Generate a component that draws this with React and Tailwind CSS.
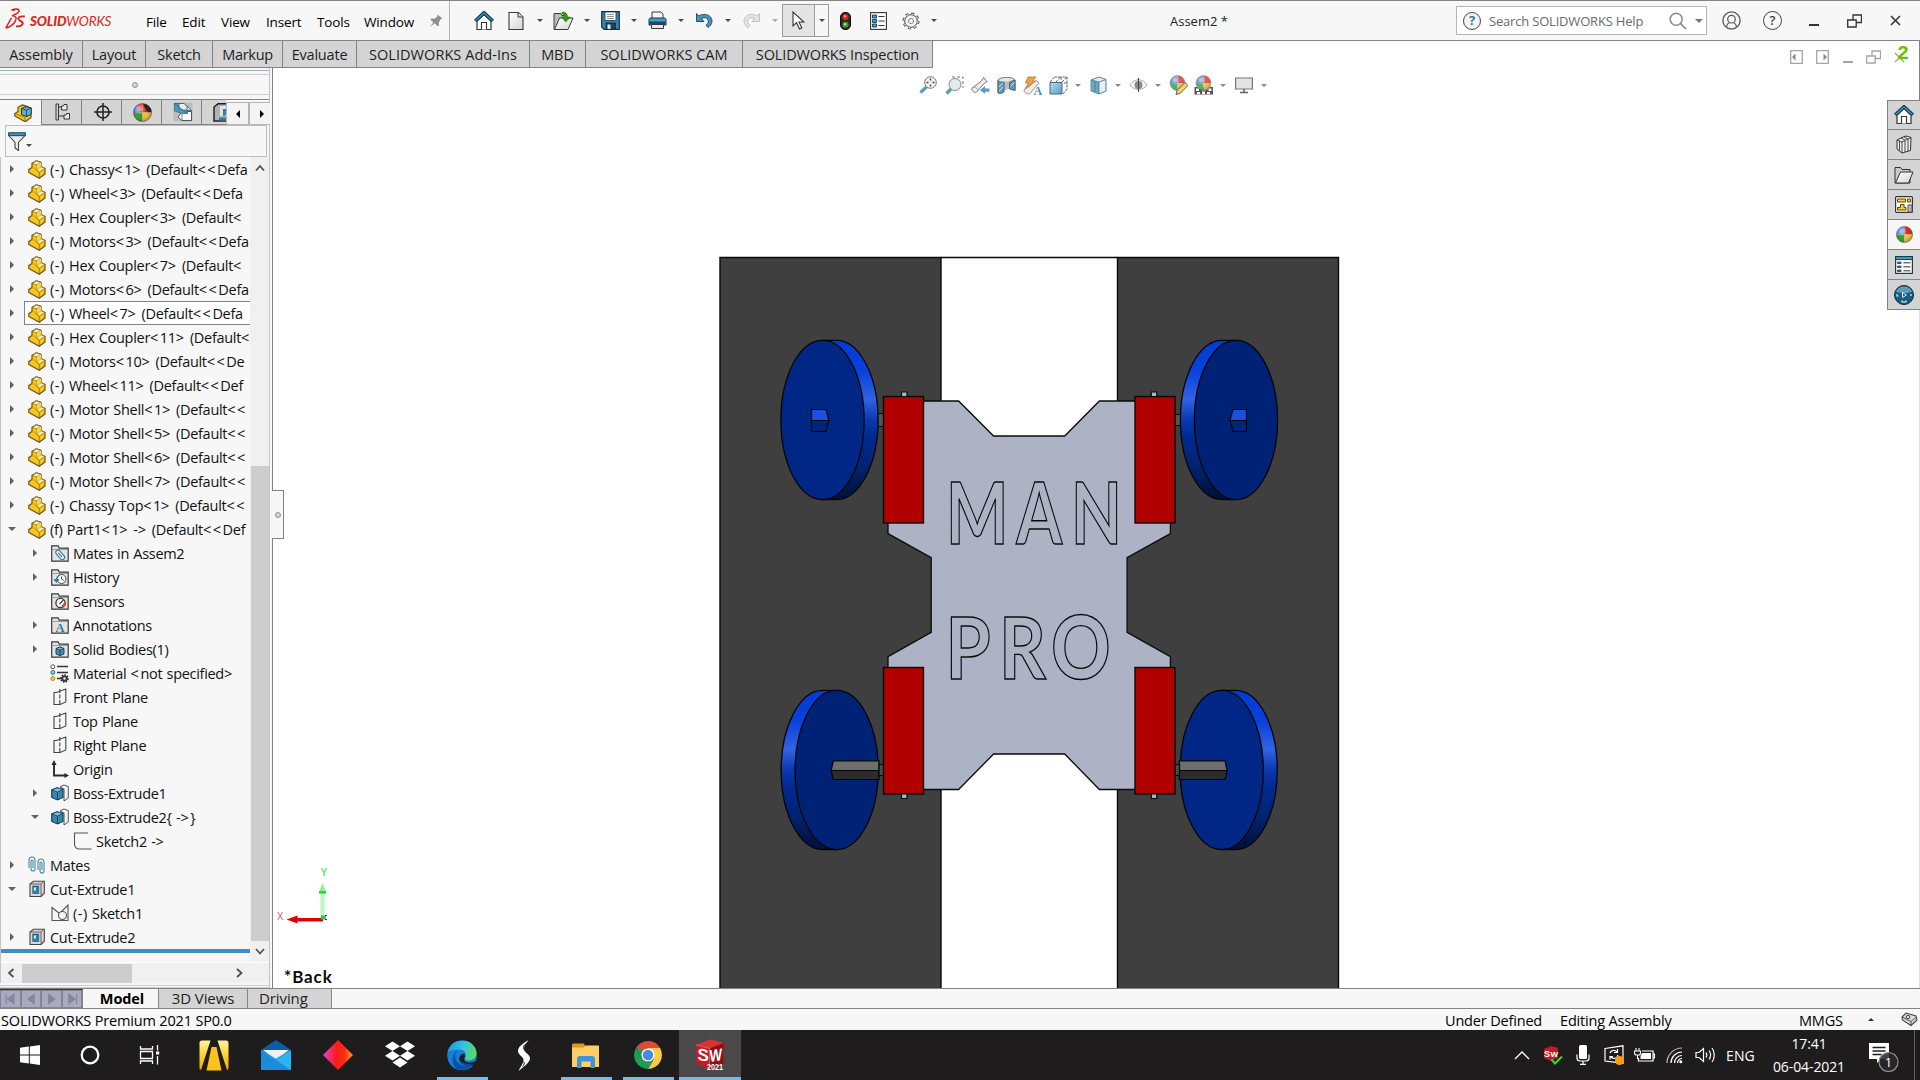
import React from "react";

const UI = "font-['Open_Sans','Noto_Sans',sans-serif]";

function Svg({ w = 20, h = w, vb, children, className = "" }) {
  return (
    <svg width={w} height={h} viewBox={vb || `0 0 ${w} ${h}`} fill="none" className={"block shrink-0 " + className}>
      {children}
    </svg>
  );
}

/* ---------- shared icons ---------- */
const Caret = ({ c = "#4a4a4a" }) => (
  <Svg w={6} h={3}><path d="M0 0h6L3 3z" fill={c} /></Svg>
);

const Home = () => (
  <Svg w={20} h={20}>
    <path d="M3 10v8.500h14V10L10 3.500z" fill="#fafafa" stroke="#333" strokeWidth="1.200" />
    <path d="M7.500 18.500v-7h5v7" fill="#fff" stroke="#333" strokeWidth="1.100" />
    <path d="M1.200 10 10 1.800 18.800 10" stroke="#12394f" strokeWidth="3.600" />
    <path d="M1.800 9.500 10 2 18.200 9.500" stroke="#3f8fbd" strokeWidth="1.500" />
  </Svg>
);
const NewDoc = () => (
  <Svg w={16} h={20}>
    <path d="M1 1.500h9.500l4.500 4.500v12.500H1z" fill="url(#gPaper)" stroke="#3a3a3a" strokeWidth="1.100" />
    <path d="M10 1.500V6h5" fill="#ddd" stroke="#3a3a3a" />
  </Svg>
);
const OpenDoc = () => (
  <Svg w={21} h={20}>
    <path d="M1 18.500V2.500h7l1 2h4v14z" fill="#bdbdbd" stroke="#3a3a3a" />
    <path d="M1.500 18.500 6.500 7h13.500l-5 11.500z" fill="url(#gPaper)" stroke="#3a3a3a" />
    <path d="M9 1c4 0 5.500 2 5.500 5h3l-4.800 5L8.500 6H11c0-2-.5-3-2-3.500z" fill="#2f9a12" stroke="#1d6b08" strokeWidth=".5" />
  </Svg>
);
const Save = () => (
  <Svg w={19} h={19}>
    <path d="M.7.7h17.600v17.600H3L.7 16z" fill="#3d82a8" stroke="#0f3347" strokeWidth="1.200" />
    <path d="M4 1h11v8.500H4z" fill="#fff" stroke="#234" strokeWidth=".8" />
    <path d="M6 3.500h7M6 5.500h7M6 7.500h7" stroke="#777" strokeWidth=".8" />
    <path d="M5 12h9.500v6.300H5z" fill="#1e4258" stroke="#0f2a3a" strokeWidth=".8" />
    <path d="M6.500 13.500h3V18h-3z" fill="#e8e8e8" />
  </Svg>
);
const Print = () => (
  <Svg w={19} h={19}>
    <path d="M4 8V1h9l2 2v5" fill="#f4f4f4" stroke="#3a3a3a" />
    <path d="M1 8.500C1 7.500 2 7 3 7h13c1 0 2 .5 2 1.500V14H1z" fill="#4a9cc6" stroke="#12394f" />
    <path d="M1.500 10.500h16v3h-16z" fill="#174b66" />
    <path d="M3.500 13.500h12v4h-12z" fill="#e8e8e8" stroke="#3a3a3a" />
  </Svg>
);
const Undo = ({ dim }) => (
  <Svg w={17} h={15} className={dim ? "-scale-x-100" : ""}>
    <path
      d="M.5.500 2.800 3C7 .5 12 1 14.500 4c2.500 3.200 2 7.500-2.500 10.500l-2-2.300c2.500-1.700 3-4 1.700-5.900C10.500 4.500 8 4 5.500 5.700L8 8.500H.500z"
      fill={dim ? "#e4e4e4" : "#4793bd"}
      stroke={dim ? "#bdbdbd" : "#16445e"}
      strokeWidth=".9"
    />
  </Svg>
);
const Cursor = () => (
  <Svg w={13} h={19}>
    <path d="M1 1v14l3.500-3.300L7.500 18l2.300-1L7 11h5z" fill="#fff" stroke="#333" strokeWidth="1.100" />
  </Svg>
);
const Traffic = () => (
  <Svg w={11} h={18}>
    <rect x=".5" y=".5" width="10" height="17" rx="4.500" fill="#2a2a2a" stroke="#111" />
    <circle cx="5.500" cy="5" r="3" fill="#e3261b" />
    <circle cx="5" cy="4.300" r="1.200" fill="#f98a7c" />
    <circle cx="5.500" cy="12.800" r="3" fill="#3c9a2f" />
    <circle cx="5" cy="12.200" r="1.200" fill="#a5e39a" />
  </Svg>
);
const ListIcon = () => (
  <Svg w={17} h={18}>
    <rect x=".6" y=".6" width="15.800" height="16.800" fill="#fff" stroke="#333" strokeWidth="1.100" />
    <path d="M2.500 3h4v3h-4zM2.500 7.500h4v3h-4zM2.500 12h4v3h-4z" fill="#4a9cc6" stroke="#12394f" strokeWidth=".9" />
    <path d="M8.500 4.500h6M8.500 9h6M8.500 13.500h6" stroke="#333" />
  </Svg>
);
const Gear = () => (
  <Svg w={18} h={18}>
    <circle cx="9" cy="9" r="7.200" stroke="#444" strokeWidth="2.600" strokeDasharray="2.830 2.830" />
    <circle cx="9" cy="9" r="6.300" fill="#f2f2f2" stroke="#444" strokeWidth="1" />
    <circle cx="9" cy="9" r="7" stroke="#f2f2f2" strokeWidth="1.200" strokeDasharray="1.900 3.598" strokeDashoffset="-.4" />
    <circle cx="9" cy="9" r="2.500" stroke="#444" strokeWidth="1" strokeDasharray="1.300 .7" />
  </Svg>
);
const Ball = ({ s = 19, eye }) => (
  <Svg w={s} h={s} vb="0 0 20 20">
    <path d="M10 10V.500A9.500 9.500 0 0 0 .5 10z" fill={eye ? "#d9221c" : "#4a7fd8"} />
    <path d="M10 10V.500A9.500 9.500 0 0 1 19.500 10z" fill="#d9221c" />
    <path d="M10 10H.500A9.500 9.500 0 0 0 10 19.500z" fill="#2e9a2c" />
    <path d="M10 10h9.500A9.500 9.500 0 0 1 10 19.500z" fill="#f0c13c" />
    {eye && <path d="M.5 10A9.500 9.500 0 0 1 5 2l2 8z" fill="#4a7fd8" />}
    <circle cx="10" cy="10" r="9.500" fill="url(#gShine)" stroke="#444" strokeWidth=".6" />
    {eye && <path d="M11 1c4 0 8 3.500 8.500 8-2 1.500-4 .5-5.500-2S11 4 11 1z" fill="#222" />}
  </Svg>
);
const BallPair = ({ kind }) => (
  <Svg w={20} h={20}>
    {kind === "scene" && (
      <g>
        <path d="M.5 12h18.500v7.500H.500z" fill="#555" />
        <path d="M2 13.500h3V16H2zM8 16.500h3V19H8zM14.500 13.500h3V16h-3zM3 17h3v2H3zM13 17h3v2h-3z" fill="#fff" />
      </g>
    )}
    <path d="M9.500 8V.500A7.500 7.500 0 0 0 2 8z" fill="#5e86d6" />
    <path d="M9.500 8V.500A7.500 7.500 0 0 1 17 8z" fill="#e0524f" />
    <path d="M9.500 8H2a7.500 7.500 0 0 0 7.500 7.500z" fill="#4fb06a" />
    <path d="M9.500 8H17a7.500 7.500 0 0 1-7.500 7.500z" fill="#ecc65c" />
    <circle cx="9.500" cy="8" r="7.500" stroke="#888" strokeWidth=".5" fill="url(#gShine)" />
    {kind === "edit" && <path d="M8 19.500 9 15.500l8-8 3 3-8 8z" fill="#f3d36b" stroke="#5a5140" strokeWidth=".9" />}
  </Svg>
);

const HelpBadge = () => (
  <div className="flex size-[18px] shrink-0 items-center justify-center rounded-full border border-[#444] bg-[#f4f4f4] text-[13px] leading-none font-bold text-[#2f7ea6]">?</div>
);

/* ---------- title bar ---------- */
const MENUS = [
  ["File", "w-[36px]"],
  ["Edit", "w-[39px]"],
  ["View", "w-[45px]"],
  ["Insert", "w-[51px]"],
  ["Tools", "w-[47px]"],
  ["Window", "w-[65px]"],
];

const Logo = () => (
  <div className="flex w-[109px] shrink-0 items-center pb-[3px] pl-[5px]">
    <Svg w={21} h={22}>
      <path d="M6.500 2.200C10 .500 14.500.500 14 3.200c-.3 1.600-3 3-5.800 3.800" stroke="#d9261c" strokeWidth="1.600" />
      <path d="M7.500 2.200 10 2M6.800 7.800C11 7.500 12.300 10.500 10 13.800 8 16.700 4.500 19.300.8 20M.8 20 6.500 9.800" stroke="#d9261c" strokeWidth="1.500" />
      <path d="M19.800 8.500c-3.200-.4-6.300.3-6.600 2.200-.3 2 5 2.300 4.600 4.800-.4 2.200-3.500 3.300-6.800 2.700" stroke="#d9261c" strokeWidth="1.900" />
    </Svg>
    <div className="ml-[4px] pt-[5px] font-['Lato',sans-serif] text-[13.500px] leading-none tracking-[-0.200px] whitespace-nowrap text-[#d9261c] italic">
      <span className="font-black">SOLID</span>
      <span>WORKS</span>
    </div>
  </div>
);

function TitleBar() {
  const tools = [
    [<NewDoc />], [<OpenDoc />], [<Save />], [<Print />], [<Undo />], [<Undo dim />, "#a8a8a8"],
  ];
  return (
    <header className="flex h-[41px] w-full shrink-0 items-center border-t border-b border-[#838383] bg-[#f7f7f7]">
      <Logo />
      <nav className="ml-[37px] flex items-center pt-[3px] text-[13.500px] tracking-[-0.150px] text-black">
        {MENUS.map(([m, w]) => (
          <span key={m} className={w + " whitespace-nowrap"}>{m}</span>
        ))}
      </nav>
      <div className="flex h-full w-[21px] items-center border-r border-[#b5b5b5]">
        <Svg w={14} h={14}>
          <path d="m8.500.500 5 4-1.800.7-2 3.300.3 2.800-1.300 1-3-3L1 13l3.300-4.800-3-2.700 1.500-1 2.900.3L8.300 2.500z" fill="#8e8e8e" />
        </Svg>
      </div>
      <div className="ml-[17px] flex h-full items-center">
        <div className="flex w-[33px] justify-center"><Home /></div>
        {tools.map(([icon, c], i) => (
          <div key={i} className="flex items-center">
            <div className="flex w-[32px] justify-center">{icon}</div>
            <div className="flex w-[15px] justify-center"><Caret c={c} /></div>
          </div>
        ))}
        <div className="flex h-[33px] w-[47px] border border-[#9a9a9a]">
          <div className="flex w-[32px] items-center justify-center border-r border-[#9a9a9a] bg-[#e4e4e4]"><Cursor /></div>
          <div className="flex w-[13px] items-center justify-center"><Caret /></div>
        </div>
        <div className="flex w-[32px] justify-center"><Traffic /></div>
        <div className="flex w-[34px] justify-center"><ListIcon /></div>
        <div className="flex w-[32px] justify-center"><Gear /></div>
        <div className="flex w-[14px] justify-center"><Caret /></div>
      </div>
      <div className="ml-[229px] pt-[2px] text-[13px] whitespace-nowrap text-[#222]">Assem2 *</div>
      <div className="ml-auto flex h-full items-center">
        <div className="flex h-[29px] w-[251px] items-center border border-[#b5b5b5] bg-white pl-[6px]">
          <HelpBadge />
          <span className="ml-[8px] w-[180px] pt-[2px] text-[13px] tracking-[-0.190px] whitespace-nowrap text-[#6a6a6a]">Search SOLIDWORKS Help</span>
          <Svg w={18} h={18}>
            <circle cx="7.200" cy="7.200" r="6" stroke="#8a8a8a" strokeWidth="1.500" />
            <path d="m11.500 11.500 5.500 5.500" stroke="#8a8a8a" strokeWidth="1.700" />
          </Svg>
          <div className="ml-[8px]"><Svg w={8} h={4}><path d="M0 0h8L4 4z" fill="#777" /></Svg></div>
        </div>
        <div className="flex w-[49px] justify-center">
          <Svg w={19} h={19}>
            <circle cx="9.500" cy="9.500" r="8.600" stroke="#555" strokeWidth="1.300" />
            <circle cx="9.500" cy="8.200" r="3.800" stroke="#555" strokeWidth="1.200" />
            <path d="M4.500 15.500c.5-2.300 1.800-3.500 3-4M14.500 15.500c-.5-2.300-1.800-3.500-3-4" stroke="#555" strokeWidth="1.200" />
          </Svg>
        </div>
        <div className="flex w-[33px] justify-center">
          <div className="flex size-[19px] items-center justify-center rounded-full border-[1.500px] border-[#444] text-[13px] leading-none font-semibold text-[#444]">?</div>
        </div>
        <div className="flex w-[49px] justify-center pt-[9px]"><div className="h-[2px] w-[10px] bg-[#333]" /></div>
        <div className="flex w-[33px] justify-center"><RestoreIcon c="#333" bg="#f7f7f7" /></div>
        <div className="flex w-[49px] justify-center pr-[1px]">
          <Svg w={11} h={11}><path d="m1 1 9 9M10 1 1 10" stroke="#333" strokeWidth="1.500" /></Svg>
        </div>
      </div>
    </header>
  );
}
const RestoreIcon = ({ c, bg }) => (
  <Svg w={15} h={14}>
    <path d="M6 1h8.500v7.500H6z" stroke={c} strokeWidth="1.300" />
    <path d="M.7 6h8.500v7H.700z" stroke={c} fill={bg} strokeWidth="1.300" />
  </Svg>
);

/* ---------- command tabs ---------- */
const TABS = [
  ["Assembly", "w-[83px] tracking-[-0.100px]"],
  ["Layout", "w-[63px] tracking-[-0.200px]"],
  ["Sketch", "w-[67px] tracking-[-0.200px]"],
  ["Markup", "w-[70px] tracking-[-0.300px]"],
  ["Evaluate", "w-[74px] tracking-[-0.200px]"],
  ["SOLIDWORKS Add-Ins", "w-[173px] tracking-[0.060px]"],
  ["MBD", "w-[56px] tracking-[-0.100px]"],
  ["SOLIDWORKS CAM", "w-[157px] tracking-[0.020px]"],
  ["SOLIDWORKS Inspection", "w-[190px] tracking-[-0.120px]"],
];
function CommandTabs() {
  return (
    <div className="flex h-[27px]">
      {TABS.map(([t, w]) => (
        <div key={t} className={w + " flex items-center justify-center border-r border-b border-[#838383] bg-[#d4d4d4] pt-[2px] text-[14.500px] whitespace-nowrap text-[#1e1e1e]"}>
          {t}
        </div>
      ))}
    </div>
  );
}

/* ---------- feature tree ---------- */
const PartIcon = () => (
  <Svg w={18} h={19}>
    <path d="M.8 9.500 4 7.500V3.300L8.300.900 13 2.400v4.300l4 1.600v5.700l-5.700 4.200L.8 12.500z" fill="#f6c51f" stroke="#6e5010" strokeWidth="1.200" />
    <path d="M4 3.300 8.300.900 13 2.400 8.800 5z" fill="#fdeeb0" stroke="#7a5a10" strokeWidth=".7" />
    <path d="M8.800 9.300 13 6.700l4 1.600-5.700 3.900z" fill="#fce68c" stroke="#8a6a18" strokeWidth=".7" />
    <path d="M8.800 5v4.300M11.300 12.200v5.800" stroke="#8a6a18" strokeWidth=".8" />
    <path d="M8.800 5 13 2.400v4.300L8.800 9.300z" fill="#fbd84e" />
    <path d="M4 7.500c1.500.2 2.500.7 3 2l4.300 2.700" stroke="#b88e1c" strokeWidth=".8" />
  </Svg>
);
const FolderIcon = ({ kind }) => (
  <Svg w={18} h={17}>
    <path d="M.7 16.200V.800h6.500l1 2.400h9v13z" fill="#e3e3e3" stroke="#3a3a3a" strokeWidth="1.200" />
    <path d="M1 4.500h16" stroke="#8a8a8a" strokeWidth=".8" />
    {kind === "mates" && (
      <g transform="rotate(-42 9 10)">
        <rect x="7" y="4.500" width="4.500" height="11" rx="2.200" stroke="#2f7ea6" strokeWidth="1.200" fill="#fff" />
        <path d="M9.200 7v6" stroke="#2f7ea6" strokeWidth="1.200" />
      </g>
    )}
    {kind === "history" && (
      <g>
        <circle cx="10.500" cy="10" r="4.500" fill="#fff" stroke="#444" />
        <path d="M10.500 7.500V10l2.300 1.500" stroke="#444" />
        <path d="M3 10.500h5L5.500 13.500zM5.500 10c.5-3 2.500-4.500 4.500-4.800" fill="#2f7ea6" stroke="#2f7ea6" strokeWidth=".9" />
      </g>
    )}
    {kind === "sensors" && (
      <g>
        <circle cx="9.500" cy="10" r="4.600" fill="#fff" stroke="#333" strokeWidth="1.300" />
        <path d="m8.500 11 4-4" stroke="#333" strokeWidth="1.100" />
        <path d="M11 13.800c2-.8 3-2.300 3-4.200" stroke="#e0401c" strokeWidth="2.400" />
      </g>
    )}
    {kind === "ann" && (
      <text x="9" y="14.500" textAnchor="middle" fontFamily="Liberation Serif, serif" fontWeight="700" fontSize="12.500" fill="#2f7ea6">A</text>
    )}
    {kind === "solid" && (
      <path d="M5 7.500 9 5.800l4 1.700V13l-4 1.700L5 13z M5 7.500l4 1.500 4-1.500M9 9v5.700" fill="#3f8fb5" stroke="#143c52" strokeWidth=".9" />
    )}
  </Svg>
);
const MaterialIcon = () => (
  <Svg w={19} h={19}>
    <circle cx="2.800" cy="2.800" r="2" stroke="#555" fill="#fff" />
    <circle cx="2.800" cy="8.500" r="2" stroke="#2f7ea6" fill="#7cc3e6" />
    <circle cx="2.800" cy="14.500" r="2" stroke="#a8871a" fill="#f8cf36" />
    <path d="M7 2.500h11M7 8.500h11M7 14.500h5" stroke="#333" strokeWidth="1.500" />
    <circle cx="14.500" cy="14.500" r="3.300" stroke="#333" strokeWidth="2" strokeDasharray="1.500 1" />
    <circle cx="14.500" cy="14.500" r="2.200" stroke="#333" strokeWidth="1.800" />
  </Svg>
);
const PlaneIcon = () => (
  <Svg w={14} h={18}>
    <path d="M1 4.500h2.500L12.800 1v13L7 16.500H1z" stroke="#444" strokeWidth="1.100" />
    <path d="M6.800 1v16" stroke="#444" strokeWidth="1.100" strokeDasharray="4 1.500" />
  </Svg>
);
const OriginIcon = () => (
  <Svg w={18} h={18}>
    <path d="M3 4v11.500h12" stroke="#2a2a2a" strokeWidth="1.900" />
    <path d="M3 0 5.600 5H.400zM18 15.500 13.500 18v-5z" fill="#2a2a2a" />
  </Svg>
);
const BossIcon = () => (
  <Svg w={18} h={18}>
    <path d="m9 3 4-2 4.300 1.500V14L13 17V5z" fill="#f2f2f2" stroke="#555" />
    <path d="M.7 6 6 3.800 12 5.500v8L6.500 16 .7 13.500z" fill="#3a87ae" stroke="#143c52" strokeWidth="1.100" />
    <path d="M.7 6 6.500 8 12 5.500 6 3.800z" fill="#7cc0de" stroke="#143c52" strokeWidth=".8" />
    <path d="M6.500 8v8" stroke="#143c52" strokeWidth=".9" />
  </Svg>
);
const CutIcon = () => (
  <Svg w={16} h={18}>
    <path d="M1 4 4.500 1.200h10.800v12L12 16.500H1z" fill="#d9d9d9" stroke="#444" strokeWidth="1.100" />
    <path d="M1 4h11v12.500M12 4l3-2.800" stroke="#555" strokeWidth=".9" />
    <path d="M4 6.500h5.500V13H4z" fill="#cfe8f4" stroke="#1d5674" strokeWidth="1.300" />
    <path d="M7 6.500h3V13H4v-2.500h3z" fill="#2f7ea6" />
  </Svg>
);
const MatesIcon = () => (
  <Svg w={17} h={18}>
    <path d="M1 12V4a3 3 0 0 1 6 0v9a2 2 0 0 1-4 0V5a1 1 0 0 1 2 0v7" stroke="#4a88a8" strokeWidth="1.100" />
    <path d="M10 14V6a3 3 0 0 1 6 0v9a2 2 0 0 1-4 0V7a1 1 0 0 1 2 0v7" stroke="#4a88a8" strokeWidth="1.100" />
  </Svg>
);
const SketchIcon = () => (
  <Svg w={19} h={18}>
    <path d="M15 1H1.500v10.500c0 3 1.500 5.500 5 5.500H18.500" stroke="#555" strokeWidth="1.100" />
  </Svg>
);
const Sketch1Icon = () => (
  <Svg w={18} h={18}>
    <path d="M1 3.500V16.500h16V1L8.500 9.500z" stroke="#555" strokeWidth="1.100" />
    <circle cx="11.500" cy="11.500" r="4" stroke="#555" strokeWidth="1.100" fill="#f7f7f7" />
  </Svg>
);

const parts = [
  "Chassy<1> (Default<<Defa",
  "Wheel<3> (Default<<Defa",
  "Hex Coupler<3> (Default<",
  "Motors<3> (Default<<Defa",
  "Hex Coupler<7> (Default<",
  "Motors<6> (Default<<Defa",
  "Wheel<7> (Default<<Defa",
  "Hex Coupler<11> (Default<",
  "Motors<10> (Default<<De",
  "Wheel<11> (Default<<Def",
  "Motor Shell<1> (Default<<",
  "Motor Shell<5> (Default<<",
  "Motor Shell<6> (Default<<",
  "Motor Shell<7> (Default<<",
  "Chassy Top<1> (Default<<",
];
const TREE = [
  ...parts.map((p, i) => ({ d: 0, a: "r", icon: <PartIcon />, t: "(-) " + p, sel: i === 6 })),
  { d: 0, a: "d", icon: <PartIcon />, t: "(f) Part1<1> -> (Default<<Def" },
  { d: 1, a: "r", icon: <FolderIcon kind="mates" />, t: "Mates in Assem2" },
  { d: 1, a: "r", icon: <FolderIcon kind="history" />, t: "History" },
  { d: 1, icon: <FolderIcon kind="sensors" />, t: "Sensors" },
  { d: 1, a: "r", icon: <FolderIcon kind="ann" />, t: "Annotations" },
  { d: 1, a: "r", icon: <FolderIcon kind="solid" />, t: "Solid Bodies(1)" },
  { d: 1, icon: <MaterialIcon />, t: "Material <not specified>" },
  { d: 1, icon: <PlaneIcon />, t: "Front Plane" },
  { d: 1, icon: <PlaneIcon />, t: "Top Plane" },
  { d: 1, icon: <PlaneIcon />, t: "Right Plane" },
  { d: 1, icon: <OriginIcon />, t: "Origin" },
  { d: 1, a: "r", icon: <BossIcon />, t: "Boss-Extrude1" },
  { d: 1, a: "d", icon: <BossIcon />, t: "Boss-Extrude2{ ->}" },
  { d: 2, icon: <SketchIcon />, t: "Sketch2 ->" },
  { d: 0, a: "r", icon: <MatesIcon />, t: "Mates" },
  { d: 0, a: "d", icon: <CutIcon />, t: "Cut-Extrude1" },
  { d: 1, icon: <Sketch1Icon />, t: "(-) Sketch1" },
  { d: 0, a: "r", icon: <CutIcon />, t: "Cut-Extrude2" },
];
const PAD = ["pl-0", "pl-[23px]", "pl-[46px]"];

/* Brackets and dashes are set a little wider than the letters around them. */
const Label = ({ t }) =>
  t.split(/([<>]+|\(-\))/).map((s, i) =>
    i % 2 ? <span key={i} className={s === "(-)" ? "tracking-[0.500px]" : "tracking-[1.500px]"}>{s}</span> : s
  );

function TreeRow({ row }) {
  return (
    <div className={"flex h-[24px] shrink-0 items-center " + PAD[row.d]}>
      <div className="flex w-[23px] shrink-0 justify-center pr-[2px]">
        {row.a === "r" && <Svg w={4} h={8}><path d="M0 0v8l4-4z" fill="#606060" /></Svg>}
        {row.a === "d" && <Svg w={8} h={4}><path d="M0 0h8L4 4z" fill="#606060" /></Svg>}
      </div>
      <div className={"flex h-full min-w-0 flex-1 items-center overflow-hidden " + (row.sel ? "border border-r-0 border-[#838383] bg-white" : "border border-r-0 border-transparent")}>
        <div className="flex w-[23px] shrink-0 justify-center">{row.icon}</div>
        <span className="ml-[2px] pt-[2px] text-[14.500px] leading-[20px] tracking-[-0.300px] whitespace-pre text-[#111] [word-spacing:0.800px]"><Label t={row.t} /></span>
      </div>
    </div>
  );
}

const Chevron = ({ d }) => (
  <Svg w={10} h={10}>
    <path
      d={{ up: "M1 7.500 5 3l4 4.500", down: "M1 3 5 7.500 9 3", left: "M7.500 1 3 5l4.500 4", right: "M3 1l4.500 4L3 9" }[d]}
      stroke="#505050"
      strokeWidth="1.800"
    />
  </Svg>
);

function PanelTabs() {
  const cell = "flex shrink-0 items-center justify-center border-r border-b border-[#838383] bg-[#d4d4d4] pl-[2px]";
  return (
    <div className="flex h-[26px] shrink-0 border-t border-[#838383]">
      <div className="flex w-[42px] shrink-0 items-center justify-center border-r border-[#838383] bg-[#f7f7f7] pl-[4px]">
        <Svg w={18} h={18}>
          <path d="M.8 9.500 4 7.500V3.300L8.300.900 13 2.400l4 2v9l-5.700 4.400L.8 12z" fill="#f6c51f" stroke="#6e5010" strokeWidth="1.200" />
          <path d="M.8 9.500 11 13.500v4" stroke="#8a6a18" strokeWidth=".8" />
          <path d="m7.500 4.500 4.500-2 5.300 1.500v6.500L12.500 12.500l-5-2z" fill="#5fa9cf" stroke="#143c52" />
          <path d="m7.500 4.500 5 1.700L17 4M12.500 6.200V12.500" stroke="#143c52" strokeWidth=".8" />
        </Svg>
      </div>
      <div className={cell + " w-[40px]"}>
        <Svg w={16} h={18}>
          <path d="M1 17V1h2.500v16zM3.500 4H7M3.500 13H9" stroke="#333" />
          <path d="M6.500 3h2l.5-1.500h3V7H6.500zM9 12h2l.5-1.500h3V16H9z" fill="#eee" stroke="#333" />
        </Svg>
      </div>
      <div className={cell + " w-[40px]"}>
        <Svg w={18} h={18}>
          <circle cx="9" cy="9" r="6" stroke="#222" strokeWidth="1.600" />
          <path d="M9 0v18M0 9h18" stroke="#222" strokeWidth="1.500" />
        </Svg>
      </div>
      <div className={cell + " w-[40px]"}><Ball s={19} eye /></div>
      <div className={cell + " w-[40px]"}>
        <Svg w={20} h={20}>
          <path d="M.5.500h19v19H.500z" fill="#b9bdc0" />
          <path d="M9 9.500h9.500V18.500H9L5 15z" fill="#fff" stroke="#444" strokeWidth=".9" />
          <path d="M1.500 1.500H11l7.500 7H9.500z" fill="#e4eef3" stroke="#444" strokeWidth=".8" />
          <path d="M1.500 1.500H6V8h8.500v3.500H9.500L1.500 9z" fill="#4f9cc2" stroke="#2f6d8c" strokeWidth=".8" />
          <path d="M1.500 1.500 14 11.500M14 3.500V11M9 18.500v-7" stroke="#2f6d8c" strokeWidth=".8" />
        </Svg>
      </div>
      <div className={cell + " w-[24px] border-r-0 !justify-end"}>
        <Svg w={13} h={19}>
          <path d="M14 .800H5L1 4v14h13" fill="#aeb4b8" stroke="#222" strokeWidth="1.500" />
          <path d="M7 3h7v3H10v7H7z" fill="#dfe3e5" />
          <path d="M10 6h4v5h-2v2h-2zM6 14.500h8v3H6z" fill="#2f7ea6" />
        </Svg>
      </div>
      <div className="flex w-[44px] shrink-0 pt-[2px]">
        <div className="flex w-[23px] shrink-0 items-center justify-center border border-[#b5b5b5] bg-[#f4f4f4]">
          <Svg w={4} h={8}><path d="M4 0v8L0 4z" fill="#000" /></Svg>
        </div>
        <div className="flex w-[21px] shrink-0 items-center justify-center border border-r-0 border-[#b5b5b5] bg-[#f4f4f4] pl-[3px]">
          <Svg w={4} h={8}><path d="M0 0v8l4-4z" fill="#000" /></Svg>
        </div>
      </div>
    </div>
  );
}

function FeaturePanel() {
  return (
    <aside className="flex w-[273px] shrink-0 border-r border-[#838383] bg-[#f7f7f7]">
      <div className="flex w-[270px] flex-col border-r border-[#c4c4c4]">
        <div className="mt-[2px] h-px shrink-0 bg-[#9bb3ba]" />
        <div className="mt-[3px] flex h-[21px] shrink-0 items-center justify-center border-t border-b border-[#cfcfcf]">
          <div className="size-[6px] rounded-full border border-[#8f8f8f] bg-[#d6d6d6]" />
        </div>
        <div className="h-[4px] shrink-0" />
        <PanelTabs />
        <div className="mr-[2px] ml-[5px] flex h-[32px] shrink-0 items-center border border-[#bdbdbd] pl-[2px]">
          <Svg w={18} h={19}>
            <path d="M.7 3.500 7 10.500V16l3.500 2.500v-8L17 3.500z" fill="#eee" stroke="#444" strokeWidth="1.100" />
            <path d="M.5.700h17v3H.500z" fill="#3f8fbd" stroke="#1c4f6b" />
          </Svg>
          <div className="mt-[8px]"><Caret /></div>
        </div>
        <div className="flex h-[805px] shrink-0 border-l border-[#c4c4c4]">
          <div className="flex w-[249px] flex-col overflow-hidden">
            {TREE.map((r, i) => <TreeRow key={i} row={r} />)}
            <div className="h-[4px] shrink-0 bg-[#3b8ec9]" />
          </div>
          <div className="flex w-[19px] flex-col items-center bg-[#f0f0f0]">
            <div className="flex h-[309px] flex-col pt-[6px]"><Chevron d="up" /></div>
            <div className="h-[475px] w-[18px] bg-[#cdcdcd]" />
            <div className="pt-[5px]"><Chevron d="down" /></div>
          </div>
        </div>
        <div className="flex h-[21px] shrink-0 items-center border-t border-l border-[#c4c4c4] border-t-white bg-[#f0f0f0]">
          <div className="flex w-[21px] justify-center pr-[2px]"><Chevron d="left" /></div>
          <div className="h-[19px] w-[110px] bg-[#cdcdcd]" />
          <div className="ml-[102px]"><Chevron d="right" /></div>
        </div>
        <div className="mt-[2px] h-[3px] shrink-0 border-t border-b border-[#cfcfcf]" />
      </div>
    </aside>
  );
}

/* ---------- graphics area ---------- */
function Wheel({ cx, cy, dx, fill }) {
  const rx = 41.600, ry = 79.600;
  const bx = cx + dx;
  return (
    <g stroke="#050505" strokeWidth="1.300">
      <path
        d={`M${cx} ${cy - ry}L${bx} ${cy - ry}A${rx} ${ry} 0 0 ${dx > 0 ? 1 : 0} ${bx} ${cy + ry}L${cx} ${cy + ry}Z`}
        fill="url(#gRim)"
      />
      <ellipse cx={cx} cy={cy} rx={rx} ry={ry} fill={fill} />
    </g>
  );
}

function Model() {
  return (
    <svg width="1646" height="920" viewBox="273 68 1646 920" fill="none" className="block">
      <path d="M720 990V257.500H941V990zM1117.500 990V257.500H1338.500V990z" fill="#3f3f3f" stroke="#0a0a0a" strokeWidth="1.400" />
      <path d="M941 257.500h176.500" stroke="#0a0a0a" strokeWidth="1.400" />

      <g fill="#555" stroke="#0a0a0a" strokeWidth="1">
        <rect x="877" y="413.500" width="7" height="13" />
        <rect x="1175" y="414.500" width="7" height="11" />
      </g>
      <Wheel cx={822.500} cy={420} dx={14} fill="#002686" />
      <Wheel cx={1236} cy={420} dx={-14} fill="#002276" />
      <Wheel cx={836.700} cy={770} dx={-14} fill="#002276" />
      <Wheel cx={1221.700} cy={770} dx={14} fill="#002686" />

      <g stroke="#050505" strokeWidth="1.200">
        <path d="M811.500 409.500H826l2.800 11h-17.300z" fill="#1a50df" />
        <path d="M811.500 431.500H826l2.800-11h-17.300z" fill="#00247c" />
        <path d="M1246.500 409.500H1233l-3.200 11h16.700z" fill="#1a50df" />
        <path d="M1246.500 431.500H1233l-3.200-11h16.700z" fill="#00247c" />
        <path d="M879 760.800h-45.700l-2.100 9.700H879z" fill="#6e6e6e" />
        <path d="M879 779.500h-45.700l-2.100-9H879z" fill="#2c2c2c" />
        <path d="M1179.300 760.800h45.800l2 9.700h-47.800z" fill="#6e6e6e" />
        <path d="M1179.300 779.500h45.800l2-9h-47.800z" fill="#2c2c2c" />
        <path d="M879 764.500h5v11h-5zM1174.500 764.500h5v11h-5z" fill="#4a4a4a" />
      </g>

      <path
        d="M888 520v13.500l43.200 24.200v74.600L888 656.700V789.500h70.600l35-35.500h71.100l34.700 35.500h71V656.700l-43.300-24.400v-74.600l43.300-24.200V401h-71l-34.700 35h-71.100l-35-35H888z"
        fill="#adb2c5"
        stroke="#0a0a0a"
        strokeWidth="1.300"
      />
      <g fill="#b00000" stroke="#0a0a0a" strokeWidth="1.400">
        <rect x="883.500" y="396.500" width="40" height="126.500" />
        <rect x="1135" y="396.500" width="40" height="126.500" />
        <rect x="883.500" y="667.500" width="40" height="126.500" />
        <rect x="1135" y="667.500" width="40" height="126.500" />
      </g>
      <g fill="#adb2c5" stroke="#0a0a0a" strokeWidth="1.200">
        <path d="M901.500 392h5.500v4.500h-5.500zM1151.300 392h5.500v4.500h-5.500zM901.500 794h5.500v4.500h-5.500zM1151.300 794h5.500v4.500h-5.500z" />
      </g>

      <g fontFamily="Lato, sans-serif" fontSize="87" fontWeight="700" fill="none" stroke="#0a0a0a" strokeWidth="1.400">
        <text transform="translate(946 543.500) scale(.76 1)" x="0 92.500 164.500" y="0">MAN</text>
        <text transform="translate(945.500 679.300) scale(.84 1)" x="0 63.700 126" y="0">PR<tspan fontWeight="900">O</tspan></text>
      </g>

      {/* orientation triad */}
      <path d="M320.500 919v-26h4v26z" fill="#b9f7bd" />
      <path d="m322.500 883 4 10.500h-8z" fill="#8af090" />
      <path d="M319 891h7v2.500h-7z" fill="#22d83a" />
      <path d="M296 918h27v3.500h-27z" fill="#d40808" />
      <path d="m286.500 919.500 11-4v8z" fill="#e00000" />
      <path d="M321 915.500h3v4h-3z" fill="#22c83a" />
      <path d="M327 915.500h-2v4h2" stroke="#2028d8" />
      <text x="321" y="876" fontFamily="Open Sans, sans-serif" fontSize="10.500" fill="#20d838">Y</text>
      <text x="277.200" y="920" fontFamily="Open Sans, sans-serif" fontSize="10.500" fill="#f05050">X</text>
      <text x="284" y="983" fontFamily="Lato, sans-serif" fontWeight="700" fontSize="17" letterSpacing=".9" fill="#0a0a0a">*Back</text>
    </svg>
  );
}

const G = ({ children, w }) => <div className={w + " flex shrink-0 justify-center"}>{children}</div>;

function HeadsUp() {
  const c = "#8a8a8a";
  return (
    <div className="absolute top-[6px] left-[642px] flex h-[22px] items-center">
      <G w="w-[26px]">
        <Svg w={18} h={18}>
          <path d="M1.500 16.500 7.500 11" stroke="#5a9cc0" strokeWidth="3.200" />
          <circle cx="11.500" cy="6.500" r="5.800" fill="#eef1f3" stroke="#777" />
          <path d="M11.500 2.500v2M11.500 8.500v2M7.500 6.500h2M13.500 6.500h2" stroke="#444" strokeWidth="1.400" />
        </Svg>
      </G>
      <G w="w-[26px]">
        <Svg w={19} h={19}>
          <path d="M7 1h11v11" stroke="#777" strokeDasharray="3 2" />
          <path d="M1.500 17.500 6 13" stroke="#5a9cc0" strokeWidth="3.200" />
          <circle cx="10" cy="8.500" r="6" fill="#e2eaec" stroke="#888" />
        </Svg>
      </G>
      <G w="w-[26px]">
        <Svg w={19} h={19}>
          <path d="m1 12 9.500-7 2-3.500 3.500 4-2.500 1.500-8 9c-2 1.500-5.500-1.500-4.500-4z" fill="#f0f0f0" stroke="#777" />
          <path d="M3 11.500c2-.5 4 1.500 3.500 3.500" stroke="#999" />
          <path d="m9 14 5-4v2.500h4.500v3.300H14V18z" fill="#5a9cc0" />
        </Svg>
      </G>
      <G w="w-[26px]">
        <Svg w={19} h={18}>
          <path d="M1 4c2-3.500 15-3.500 17 0v10.500l-5.500-2V6.500H7v8.500c-1.500 2-4.500 2-6 1.500z" fill="#e4e4e4" stroke="#777" />
          <path d="M7 5.500h5.500V13L7 14.500z" fill="#bdbdbd" />
          <path d="M1 4.500c1.500 1.500 3.500 2 6 1.500v10c-2 1.500-4 1.500-6 1z" fill="#5a9cc0" stroke="#55626a" />
          <path d="M12.500 6 18 4v10.500l-5.500-1.500z" fill="#5a9cc0" stroke="#55626a" />
          <path d="m2 11 4-4M2 15l4-4M13.500 10.500l4-4" stroke="#d9ecf5" strokeWidth=".9" />
        </Svg>
      </G>
      <G w="w-[26px]">
        <Svg w={19} h={19}>
          <path d="M5 1h8L9.500 5h3L2 13l3.500-6H2.500z" fill="#f2a24a" stroke="#b87628" strokeWidth=".8" />
          <path d="m1 14 7-5 5-4.500 3 2.500-4 4.500-5 6c-2 1.500-6.500-1-6-3.500z" fill="#eee" stroke="#888" strokeWidth=".9" />
          <text x="10.500" y="18.500" fontFamily="Liberation Serif, serif" fontSize="12" fontWeight="700" fill="#4a8fb5">A</text>
        </Svg>
      </G>
      <G w="w-[26px]">
        <Svg w={19} h={19}>
          <path d="M5.500 1h12.500v12l-4 5M18 1l-5 5M5.500 1 1 6M11 1 7 6M12 1v3M18 7h-4" stroke="#666" strokeDasharray="3 1" />
          <path d="M1 6.500h12v11.500H1z" fill="url(#gBlueSq)" stroke="#4b6b7c" />
        </Svg>
      </G>
      <G w="w-[13px]"><Caret c={c} /></G>
      <G w="w-[28px]">
        <Svg w={17} h={19}>
          <path d="M1 4 9 1l7 2.500v11.500L9 18l-8-3z" fill="#dff0f8" stroke="#667a85" />
          <path d="m1 4 8 2v12l-8-3z" fill="#66a8c9" />
          <path d="m1 4 8 2 7-2.500M9 6v12M5 5v11" stroke="#5b6f7a" strokeWidth=".8" />
        </Svg>
      </G>
      <G w="w-[12px]"><Caret c={c} /></G>
      <G w="w-[28px]">
        <Svg w={19} h={16}>
          <path d="M1 8c4-7 13-7 17 0-4 6-13 6-17 0z" fill="#fafafa" stroke="#aaa" />
          <circle cx="9.500" cy="8" r="4" fill="#8a8a8a" />
          <path d="M9.500 1v14" stroke="#444" />
        </Svg>
      </G>
      <G w="w-[12px]"><Caret c={c} /></G>
      <G w="w-[28px]"><BallPair kind="edit" /></G>
      <G w="w-[24px]"><BallPair kind="scene" /></G>
      <G w="w-[14px]"><Caret c={c} /></G>
      <G w="w-[28px]">
        <Svg w={18} h={17}>
          <path d="M.6 1h16.800v11H.600z" fill="#e4e4e4" stroke="#777" strokeWidth="1.200" />
          <path d="M9 12v3M5 15.500h8" stroke="#666" strokeWidth="1.600" />
        </Svg>
      </G>
      <G w="w-[12px]"><Caret c={c} /></G>
    </div>
  );
}

function DocControls() {
  return (
    <div className="absolute top-[7px] right-[8px] flex h-[18px] items-center gap-[11px]">
      <Svg w={13} h={14} className="mr-[2px]"><path d="M.7.700h11.600v12.600H.700z" stroke="#a5a5a5" strokeWidth="1.300" /><path d="M2 7 5.500 3.500v7z" fill="#8a8a8a" /></Svg>
      <Svg w={13} h={14} className="mr-[3px]"><path d="M.7.700h11.600v12.600H.700z" stroke="#a5a5a5" strokeWidth="1.300" /><path d="M11 7 7.500 3.500v7z" fill="#8a8a8a" /></Svg>
      <div className="mt-[9px] mr-[2px] h-[2px] w-[10px] bg-[#a5a5a5]" />
      <RestoreIcon c="#a5a5a5" bg="#fff" />
      <div className="relative ml-[2px] flex h-[18px] w-[18px] items-center">
        <Svg w={11} h={11}><path d="m1 1 9 9M10 1 1 10" stroke="#a5a5a5" strokeWidth="1.500" /></Svg>
        <span className="absolute -top-[4px] left-[3px] font-['Liberation_Mono',monospace] text-[20px] leading-[20px] font-bold text-[#6fbf00]">2</span>
      </div>
    </div>
  );
}

function TaskPane() {
  const items = [
    <Home />,
    <Svg w={17} h={19}>
      <path d="M1 5 5 3l2-1 3-1 2 .5 3 1-.5 13L6 18l-5-4z" fill="#eee" stroke="#333" />
      <path d="M1 5l5 2 9-4.500M6 7v11M3.500 6v10M9 6v11M12 4.500v11.500M5 3l4 2M8 2l4 2" stroke="#333" strokeWidth=".9" />
    </Svg>,
    <Svg w={20} h={18}>
      <path d="M1 17V1.500h5.500L8 3.500h8V17z" fill="#c9c9c9" stroke="#333" />
      <path d="M1.500 17 6.500 6H19l-4.500 11z" fill="url(#gPaper)" stroke="#333" />
    </Svg>,
    <Svg w={18} h={17}>
      <rect x=".6" y=".6" width="16.800" height="15.800" rx="1" fill="#fff" stroke="#333" strokeWidth="1.200" />
      <path d="M2.500 3h8v3h-8zM12.500 3h3v3h-3zM2.500 11.500h3v-3h3.500v3h2V14h-8.500z" fill="#f8cf36" stroke="#5c480c" />
      <path d="M13 9h4v7h-4z" fill="#b8b8b8" stroke="#555" />
    </Svg>,
    <Ball s={17} />,
    <Svg w={18} h={18}>
      <rect x=".6" y=".6" width="16.800" height="16.800" fill="#fff" stroke="#333" strokeWidth="1.200" />
      <path d="M.6.600h16.800v3H.600z" fill="#4a9cc6" stroke="#12394f" />
      <path d="M2.500 6h3.500v1.500H2.500zM2.500 10h3.500v1.500H2.500zM2.500 14h3.500v1.500H2.500z" fill="#4a9cc6" stroke="#12394f" strokeWidth=".8" />
      <path d="M8.500 6.800h7M8.500 10.800h7M8.500 14.800h7" stroke="#333" />
    </Svg>,
    <Svg w={20} h={20}>
      <circle cx="10" cy="10" r="9.500" fill="#1d5c80" stroke="#0d2c3f" />
      <path d="M2 6.500a9 9 0 0 1 16 0c-4 2-12 2-16 0z" fill="#7fb5cf" opacity=".7" />
      <path d="m8.500 7.500 4 2.500-4 2.500z" stroke="#cfe8f4" />
      <path d="M8 15.500v1.500h4v-1.500M3 9v2h1.500M17 9v2" stroke="#dff" strokeWidth="1.100" />
    </Svg>,
  ];
  return (
    <div className="absolute top-[59px] right-0 w-[33px] border-t border-l border-[#838383]">
      {items.map((it, i) => (
        <div key={i} className={"flex items-center justify-center border-b border-[#838383] " + (i === 0 ? "h-[29px] " : "h-[30px] ") + (i === 4 ? "bg-[#f7f7f7]" : "bg-[#d4d4d4]")}>
          {it}
        </div>
      ))}
    </div>
  );
}

/* ---------- bottom ---------- */
function BottomTabs() {
  const nav = [
    "M4 3v12M14 3v12L6 9z",
    "M13 3v12L5 9z",
    "M6 3v12l8-6z",
    "M5 3v12l8-6zM15 3v12",
  ];
  const tab = "flex items-center border-r border-[#838383] bg-[#d4d4d4] text-[15px] tracking-[-0.100px] text-[#1e1e1e]";
  return (
    <div className="flex h-[21px] shrink-0 border-t border-b border-[#838383] bg-[#f7f7f7]">
      <div className="flex w-[83px] border-t border-r border-[#333] border-r-[#838383] bg-[#8f8fa8]">
        {nav.map((d, i) => (
          <div key={i} className="flex w-[20.500px] items-center justify-center border border-[#83839b] bg-[#a9a9bf]">
            <Svg w={14} h={14} vb="0 0 18 18"><path d={d} fill="#8585a0" stroke="#8585a0" strokeWidth="1.500" /></Svg>
          </div>
        ))}
      </div>
      <div className="flex w-[76px] items-center justify-center border-r border-[#838383] bg-[#f7f7f7] pl-[3px] text-[14.500px] tracking-[-0.100px] font-bold text-black">Model</div>
      <div className={tab + " w-[89px] justify-center"}>3D Views</div>
      <div className={tab + " w-[84px] pl-[11px]"}>Driving</div>
    </div>
  );
}

function StatusBar() {
  return (
    <div className="flex h-[21px] shrink-0 items-center overflow-hidden bg-[#f7f7f7] text-[14.500px] leading-[20px] tracking-[-0.170px] whitespace-nowrap text-black">
      <div className="w-[1445px] pt-[2px] pl-[1px]">SOLIDWORKS Premium 2021 SP0.0</div>
      <div className="w-[115px] pt-[2px]">Under Defined</div>
      <div className="w-[239px] pt-[2px]">Editing Assembly</div>
      <div className="w-[69px] pt-[2px]">MMGS</div>
      <Svg w={6} h={3}><path d="M0 3h6L3 0z" fill="#333" /></Svg>
      <Svg w={17} h={15} className="ml-[27px]">
        <path d="m1 5 4-4 10 3 1 4-6 5.500L1.500 8z" fill="#ddd" stroke="#444" strokeWidth="1.100" />
        <path d="m1 5 9 4.500L15.500 5M10 9.500v4" stroke="#444" strokeWidth=".9" />
        <circle cx="7" cy="5" r="1.800" stroke="#444" />
      </Svg>
    </div>
  );
}

const APPS = [
  { i: <Svg w={20} h={20}><path d="M0 2.800 8.800 1.500v8H0zM9.800 1.400 20 0v9.500H9.800zM0 10.500h8.800v8L0 17.200zM9.800 10.500H20V20L9.800 18.600z" fill="#fff" /></Svg> },
  { i: <Svg w={20} h={20}><circle cx="10" cy="10" r="8.300" stroke="#fff" strokeWidth="2.200" /></Svg> },
  {
    i: (
      <Svg w={22} h={20}>
        <path d="M1.500 1v3h12V1M1.500 19v-3h12v3M1.500 6.500h12v7h-12zM18.500 0v5.500M18.500 11v8.500" stroke="#fff" strokeWidth="1.300" />
        <path d="M17 6.500h3.200v3H17z" fill="#fff" />
      </Svg>
    ),
  },
  {
    i: (
      <Svg w={30} h={31}>
        <path d="M3 .500h8.500L2 30a2 2 0 0 1-1.500-2V3A2.500 2.500 0 0 1 3 .500z" fill="url(#gGold)" />
        <path d="M18.500.500H27A2.500 2.500 0 0 1 29.500 3v25A2 2 0 0 1 28 30z" fill="url(#gGold)" />
        <path d="M12.500 7h5l5 23.500h-15z" fill="#fbc21c" />
      </Svg>
    ),
  },
  {
    i: (
      <Svg w={30} h={30}>
        <path d="M0 10 15 0l15 10v5H0z" fill="#0a5ea8" />
        <path d="M2 10h26L15 20z" fill="#eef0f2" />
        <path d="M0 10v20h30V10L15 18.500z" fill="#2fb4f2" />
        <path d="M0 30V10l30 20z" fill="#1c8bdb" />
        <path d="M0 30 15 18.500 30 10v1L16 20z" fill="#1c8bdb" opacity=".35" />
      </Svg>
    ),
  },
  { i: <Svg w={30} h={30}><path d="M15 0 30 15 15 30 0 15z" fill="url(#gDia)" /></Svg> },
  {
    i: (
      <Svg w={30} h={28}>
        <path d="M7.500.500 15 5.200 7.500 10 0 5.200zM22.500.500 30 5.200 22.500 10 15 5.200zM7.500 10l7.500 4.800-7.500 4.800L0 14.800zM22.500 10l7.500 4.800-7.500 4.800-7.500-4.800zM15 16.500l7.500 5-7.500 5-7.500-5z" fill="#fff" />
      </Svg>
    ),
  },
  {
    on: 1,
    i: (
      <Svg w={30} h={31}>
        <circle cx="15" cy="15.500" r="14.800" fill="#1180d6" />
        <path d="M.5 13C2 4.500 8 .500 15 .500c9 0 14.500 6.500 14.500 12.500 0 5-4 7.500-8 7.500-3 0-4-1.500-3-3.500C20 13 17 9.500 12.500 9.500 7 9.500 2 10 .5 13z" fill="url(#gEdge)" />
        <path d="M12.500 9.800c-5 2-5.500 8-2.500 12 3.500 4.500 10 5 15.500 2.500-5 6.500-11.500 6.500-15 5-6.500-3.500-7-16.500 2-19.500z" fill="#0d4fa6" />
        <path d="M17.500 14c1.500 4-2 5 1 7.500 2.500 1.700 7 1.300 9.500-.5l1.500 1-3 3c-6 1.500-12.500 0-14-4.500-1-3 1.500-7.500 5-6.500z" fill="#1f1c1d" />
        <path d="M27 23.500c-6.500 3-13 1.500-15.200-4 1.700 2.500 9.200 6 15.200 4z" fill="#0d4fa6" />
      </Svg>
    ),
  },
  {
    i: (
      <Svg w={14} h={31}>
        <path d="M11.500 0C5 4 1 7 1 11c0 4 5.500 5.500 5.500 9 0 3.500-3.500 7.500-5 11 4.500-4 11-8 11.500-12.500.3-4-5.500-5.500-6-9C6.500 6 9.500 3 11.500 0z" fill="#fff" />
        <path d="M7 9.500C5.500 6.500 7.500 5 9 3.500M6.500 21.500c1.500 1.500.5 3.500-1 5" stroke="#1f1c1d" strokeWidth="1" />
      </Svg>
    ),
  },
  {
    on: 1,
    i: (
      <Svg w={28} h={25}>
        <path d="M0 2A1.500 1.500 0 0 1 1.500.500H12l1.500 3.200H27V24H0z" fill="#e0980f" />
        <path d="M0 4.500h12l1.500-2H27V24H0z" fill="#fcd067" />
        <path d="M5 25v-9a3 3 0 0 1 3-3h12a3 3 0 0 1 3 3v9h-4.500v-6.500h-9V25z" fill="#3d94d8" />
      </Svg>
    ),
  },
  {
    on: 1,
    i: (
      <Svg w={28} h={30} vb="0 -1 28 30">
        <path d="M14 14 1.900 7A14 14 0 0 1 26.100 7z" fill="#dc4a3c" />
        <path d="M14 0a14 14 0 0 1 12.100 7H14z" fill="#dc4a3c" />
        <path d="M14 7h12.100A14 14 0 0 1 14 28l6-10.500z" fill="#fbcb43" />
        <path d="M1.900 7A14 14 0 0 0 14 28l6-10.500-6 3.500-6-3.500z" fill="#1f9d57" />
        <path d="M1.900 7 8 17.500l3-8z" fill="#1f9d57" />
        <circle cx="14" cy="14" r="6.600" fill="#fff" />
        <circle cx="14" cy="14" r="5.200" fill="#4a86e8" />
      </Svg>
    ),
  },
  {
    on: 1,
    active: 1,
    i: (
      <Svg w={32} h={32}>
        <path d="m2 6 14-5.500L29.500 4v20.500L15 30.500 2.500 25z" fill="#c41c24" />
        <path d="m2 6 14-5.500L29.500 4 15.500 9.500z" fill="#d83238" />
        <path d="M15.500 9.500v21L29.500 24.500V4z" fill="#8d1018" />
        <path d="m2 6 13.500 3.500v21" stroke="#f06a6a" strokeWidth=".7" />
        <text transform="translate(3.500 21) skewY(8)" fontFamily="Liberation Sans, sans-serif" fontWeight="700" fontSize="17" fill="#fff">S</text>
        <text transform="translate(15.500 23) skewY(-8) scale(.78 1)" fontFamily="Liberation Sans, sans-serif" fontWeight="700" fontSize="17" fill="#fff">W</text>
        <text x="13" y="31" textLength="16" lengthAdjust="spacingAndGlyphs" fontFamily="Liberation Sans, sans-serif" fontWeight="700" fontSize="9" fill="#fff">2021</text>
      </Svg>
    ),
  },
];

function Taskbar() {
  const cell = "flex w-[30.500px] shrink-0 justify-center";
  return (
    <footer className="flex h-[50px] shrink-0 items-center bg-[#1f1c1d] text-white">
      {APPS.map((a, i) => (
        <div key={i} className={(i < 3 ? "w-[60px]" : "w-[62px]") + (i === 3 ? " ml-[3px]" : "") + " flex h-full shrink-0 flex-col items-center justify-end " + (a.active ? "bg-[#4b4849]" : "")}>
          <div className="flex min-h-0 flex-1 items-center pt-[3px]">{a.i}</div>
          <div className={"h-[3px] " + (a.active ? "w-full " : "w-[51px] ") + (a.on ? "bg-[#76b9ed]" : "")} />
        </div>
      ))}
      <div className="ml-auto flex h-full items-center">
        <div className={cell}><Svg w={16} h={9}><path d="m1 8 7-7 7 7" stroke="#fff" strokeWidth="1.300" /></Svg></div>
        <div className={cell}>
          <Svg w={20} h={19}>
            <path d="m1 3 7-3 7 2v10l-7 3-7-3z" fill="#c41c24" />
            <text x="1" y="11" fontFamily="Liberation Sans, sans-serif" fontWeight="700" fontSize="9" fill="#fff">S</text>
            <text x="7.500" y="11" fontFamily="Liberation Sans, sans-serif" fontWeight="700" fontSize="8" fill="#fff">W</text>
            <path d="m8.500 13.500 3.500 4 7-7" stroke="#30e030" strokeWidth="2" />
          </Svg>
        </div>
        <div className={cell}>
          <Svg w={14} h={20}>
            <rect x="3" y="0" width="8" height="14" rx="1.500" fill="#fff" />
            <path d="M1 9.500v3.500c0 2 1 3 3 3h6c2 0 3-1 3-3V9.500M7 16v3M4 19.300h6" stroke="#fff" strokeWidth="1.200" />
          </Svg>
        </div>
        <div className={cell}>
          <Svg w={20} h={20}>
            <path d="M1 3.500 19 .800v17.400L1 16z" stroke="#fff" strokeWidth="1.200" />
            <path d="M6 8a4 4 0 0 1 7-1M14 10a4 4 0 0 1-7 2M13.500 4v3.500H10M6 14.500V11.500h3" stroke="#fff" strokeWidth="1.200" />
            <circle cx="15.500" cy="15.500" r="4.500" fill="#ff9d0a" />
          </Svg>
        </div>
        <div className={cell}>
          <Svg w={21} h={14}>
            <path d="M2 0v3M5 0v3M.500 3h6v2a2 2 0 0 1-2 2h-2a2 2 0 0 1-2-2zM3.500 7v4" stroke="#fff" strokeWidth="1.100" />
            <path d="M8 3h11v10H4.500v-3M19 6h1.500v4H19" stroke="#fff" strokeWidth="1.200" />
            <path d="M8 5h9v6H6.500V8z" fill="#fff" />
          </Svg>
        </div>
        <div className={cell}>
          <Svg w={17} h={17}>
            <path d="M1 16A15 15 0 0 1 16 1" stroke="#bbb" strokeWidth="1.200" />
            <path d="M5 16A11 11 0 0 1 16 5M8.500 16A7.500 7.500 0 0 1 16 8.500M11.500 16a4.500 4.500 0 0 1 4.500-4.500" stroke="#fff" strokeWidth="1.200" />
            <circle cx="14.800" cy="14.800" r="1.500" fill="#fff" />
          </Svg>
        </div>
        <div className={cell}>
          <Svg w={21} h={16}>
            <path d="M1 5.500h3L8.500 1.500v13L4 10.500H1z" stroke="#fff" strokeWidth="1.200" />
            <path d="M11 5.500c1 1.500 1 3.500 0 5M14 3.500c2 2.800 2 6.200 0 9M17 1c3 4 3 10 0 14" stroke="#fff" strokeWidth="1.200" />
          </Svg>
        </div>
        <div className="ml-[5.500px] w-[43px] text-[14px] tracking-[0.100px]">ENG</div>
        <div className="flex w-[80px] flex-col items-center text-[14px] leading-[23px] tracking-[-0.100px] whitespace-nowrap">
          <span>17:41</span>
          <span>06-04-2021</span>
        </div>
        <div className="ml-[19px] flex w-[46px] justify-start">
          <Svg w={32} h={34}>
            <path d="M1 5h20v16h-8l-4 4v-4H1z" fill="#fff" />
            <path d="M4.500 9.500h13M4.500 13h13M4.500 16.500h9" stroke="#1f1c1d" strokeWidth="1.400" />
            <circle cx="20.500" cy="24" r="9.500" fill="#2b2829" fillOpacity=".88" stroke="#8f8f8f" strokeWidth="1.200" />
            <text x="20.500" y="28.800" textAnchor="middle" fontFamily="Open Sans, sans-serif" fontSize="13" fill="#fff">1</text>
          </Svg>
        </div>
        <div className="mr-[5px] h-full w-px bg-[#5f5c5d]" />
      </div>
    </footer>
  );
}

const Defs = () => (
  <svg width="0" height="0" className="absolute">
    <defs>
      <linearGradient id="gPaper" x1="0" y1="0" x2="1" y2="1"><stop offset="0" stopColor="#fff" /><stop offset="1" stopColor="#d6d6d6" /></linearGradient>
      <linearGradient id="gBlueSq" x1="0" y1="0" x2="1" y2="1"><stop offset="0" stopColor="#b5dcef" /><stop offset="1" stopColor="#5a9fc2" /></linearGradient>
      <linearGradient id="gRim" x1="0" y1="0" x2="0" y2="1">
        <stop offset="0" stopColor="#003bd4" /><stop offset=".2" stopColor="#0a42dc" /><stop offset=".37" stopColor="#3263e4" />
        <stop offset=".5" stopColor="#0b38b0" /><stop offset=".6" stopColor="#002a94" /><stop offset=".8" stopColor="#00226f" /><stop offset="1" stopColor="#000f36" />
      </linearGradient>
      <radialGradient id="gShine" cx=".35" cy=".3" r=".7"><stop offset="0" stopColor="#fff" stopOpacity=".65" /><stop offset=".5" stopColor="#fff" stopOpacity="0" /><stop offset="1" stopColor="#000" stopOpacity=".2" /></radialGradient>
      <linearGradient id="gGold" x1="0" y1="0" x2="0" y2="1"><stop offset="0" stopColor="#fff3a0" /><stop offset=".5" stopColor="#fbd22e" /><stop offset="1" stopColor="#f0a80c" /></linearGradient>
      <linearGradient id="gDia" x1="0" y1="0" x2="1" y2="0"><stop offset="0" stopColor="#e83fd0" /><stop offset=".45" stopColor="#fb1a1a" /><stop offset=".7" stopColor="#ff2a10" /><stop offset="1" stopColor="#ffa01a" /></linearGradient>
      <linearGradient id="gEdge" x1="0" y1=".4" x2="1" y2=".6"><stop offset="0" stopColor="#1a9be0" /><stop offset=".5" stopColor="#35c1e8" /><stop offset="1" stopColor="#5fdc4e" /></linearGradient>
    </defs>
  </svg>
);

export default function App() {
  return (
    <div className={UI + " flex h-[1080px] w-[1920px] flex-col overflow-hidden bg-white"}>
      <Defs />
      <TitleBar />
      <div className="relative flex h-[947px] shrink-0 flex-col">
        <CommandTabs />
        <div className="flex h-[920px] shrink-0">
          <FeaturePanel />
          <main className="relative h-[920px] flex-1 border-r border-[#e0e0e0]">
            <Model />
            <HeadsUp />
            <div className="absolute top-[422px] -left-[1px] flex h-[49px] w-[12px] items-center justify-center border border-l-0 border-[#838383] bg-[#f7f7f7]">
              <div className="size-[6px] rounded-full border border-[#8f8f8f] bg-[#d6d6d6]" />
            </div>
          </main>
        </div>
        <div className="absolute top-0 right-0 h-[60px] w-px bg-[#838383]" />
        <DocControls />
        <TaskPane />
      </div>
      <BottomTabs />
      <StatusBar />
      <Taskbar />
    </div>
  );
}
